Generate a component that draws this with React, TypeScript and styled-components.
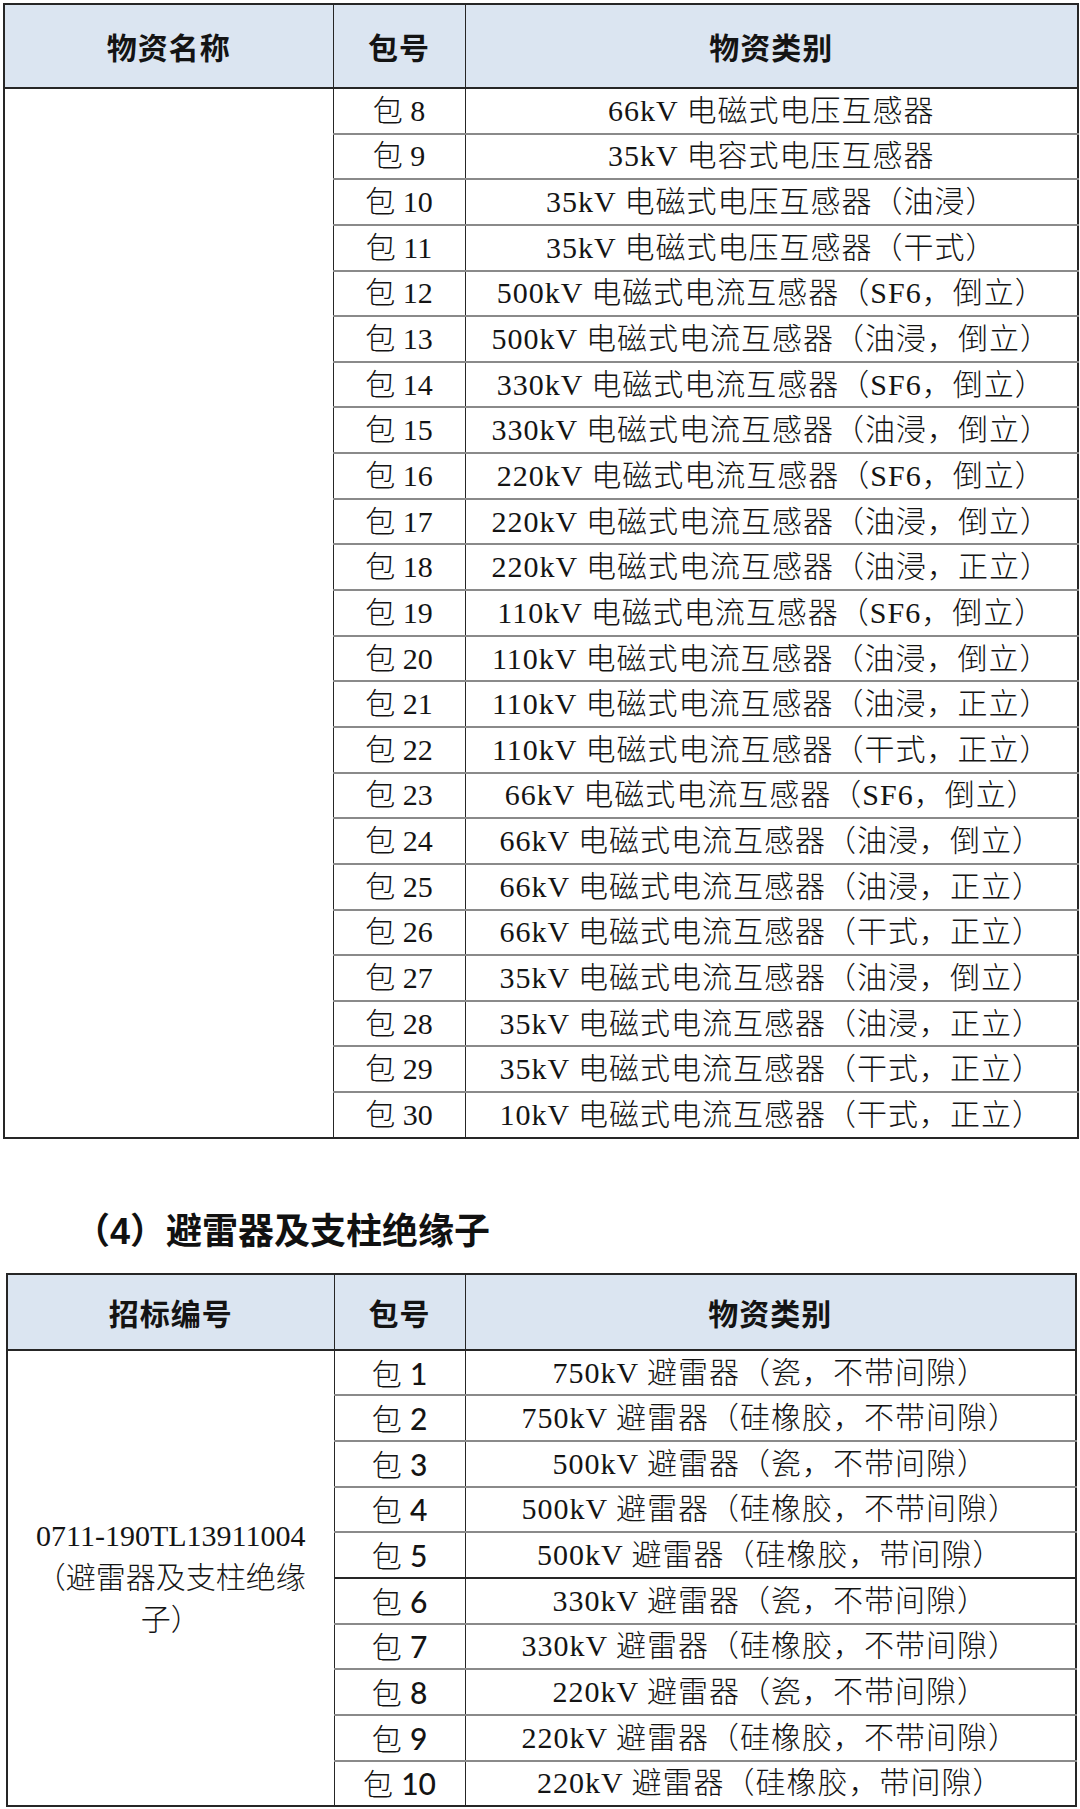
import React from "react";
import styled, { createGlobalStyle } from "styled-components";

const transformerRows: [string, string][] = [
  ["8", "66kV 电磁式电压互感器"],
  ["9", "35kV 电容式电压互感器"],
  ["10", "35kV 电磁式电压互感器（油浸）"],
  ["11", "35kV 电磁式电压互感器（干式）"],
  ["12", "500kV 电磁式电流互感器（SF6，倒立）"],
  ["13", "500kV 电磁式电流互感器（油浸，倒立）"],
  ["14", "330kV 电磁式电流互感器（SF6，倒立）"],
  ["15", "330kV 电磁式电流互感器（油浸，倒立）"],
  ["16", "220kV 电磁式电流互感器（SF6，倒立）"],
  ["17", "220kV 电磁式电流互感器（油浸，倒立）"],
  ["18", "220kV 电磁式电流互感器（油浸，正立）"],
  ["19", "110kV 电磁式电流互感器（SF6，倒立）"],
  ["20", "110kV 电磁式电流互感器（油浸，倒立）"],
  ["21", "110kV 电磁式电流互感器（油浸，正立）"],
  ["22", "110kV 电磁式电流互感器（干式，正立）"],
  ["23", "66kV 电磁式电流互感器（SF6，倒立）"],
  ["24", "66kV 电磁式电流互感器（油浸，倒立）"],
  ["25", "66kV 电磁式电流互感器（油浸，正立）"],
  ["26", "66kV 电磁式电流互感器（干式，正立）"],
  ["27", "35kV 电磁式电流互感器（油浸，倒立）"],
  ["28", "35kV 电磁式电流互感器（油浸，正立）"],
  ["29", "35kV 电磁式电流互感器（干式，正立）"],
  ["30", "10kV 电磁式电流互感器（干式，正立）"],
];

const arresterRows: [string, string][] = [
  ["1", "750kV 避雷器（瓷，不带间隙）"],
  ["2", "750kV 避雷器（硅橡胶，不带间隙）"],
  ["3", "500kV 避雷器（瓷，不带间隙）"],
  ["4", "500kV 避雷器（硅橡胶，不带间隙）"],
  ["5", "500kV 避雷器（硅橡胶，带间隙）"],
  ["6", "330kV 避雷器（瓷，不带间隙）"],
  ["7", "330kV 避雷器（硅橡胶，不带间隙）"],
  ["8", "220kV 避雷器（瓷，不带间隙）"],
  ["9", "220kV 避雷器（硅橡胶，不带间隙）"],
  ["10", "220kV 避雷器（硅橡胶，带间隙）"],
];

const GlobalStyle = createGlobalStyle`
  html, body {
    margin: 0;
    padding: 0;
    background: #ffffff;
  }
  body {
    font-family: "Liberation Serif", "Noto Sans CJK SC", serif;
    color: #141414;
  }
`;

export default function App() {
  return (
    <Page>
      <GlobalStyle />
      <Table $left={3} $width={1076}>
        <colgroup>
          <col style={{ width: 329 }} />
          <col style={{ width: 132 }} />
          <col />
        </colgroup>
        <thead>
          <HeadRow $h={84}>
            <HeadCell>物资名称</HeadCell>
            <HeadCell>包号</HeadCell>
            <HeadCell>物资类别</HeadCell>
          </HeadRow>
        </thead>
        <tbody>
          {transformerRows.map(([pkg, kind], i) => (
            <Row key={pkg}>
              {i === 0 && <NameCell rowSpan={transformerRows.length} />}
              <PkgCell>
                包 <span>{pkg}</span>
              </PkgCell>
              <KindCell>{kind}</KindCell>
            </Row>
          ))}
        </tbody>
      </Table>

      <SectionTitle>
        （<b>4</b>）避雷器及支柱绝缘子
      </SectionTitle>

      <Table $left={6} $width={1071}>
        <colgroup>
          <col style={{ width: 327 }} />
          <col style={{ width: 131 }} />
          <col />
        </colgroup>
        <thead>
          <HeadRow $h={76}>
            <HeadCell>招标编号</HeadCell>
            <HeadCell>包号</HeadCell>
            <HeadCell>物资类别</HeadCell>
          </HeadRow>
        </thead>
        <tbody>
          {arresterRows.map(([pkg, kind], i) => (
            <Row key={pkg} $dark={pkg === "6"}>
              {i === 0 && (
                <NameCell rowSpan={arresterRows.length}>
                  0711-190TL13911004（避雷器及支柱绝缘子）
                </NameCell>
              )}
              <PkgCell $sans>
                包 <span>{pkg}</span>
              </PkgCell>
              <KindCell>{kind}</KindCell>
            </Row>
          ))}
        </tbody>
      </Table>
    </Page>
  );
}

const Page = styled.div`
  width: 1080px;
  padding-top: 3px;
`;

const Table = styled.table<{ $left: number; $width: number }>`
  margin-left: ${(p) => p.$left}px;
  width: ${(p) => p.$width}px;
  border-collapse: collapse;
  table-layout: fixed;
  border: 2px solid #262626;
`;

const HeadRow = styled.tr<{ $h: number }>`
  height: ${(p) => p.$h}px;
  background: #dbe5f1;
`;

const HeadCell = styled.th`
  padding: 0;
  border-left: 1px solid #262626;
  border-bottom: 2px solid #262626;
  font-family: "Noto Sans CJK SC", sans-serif;
  font-weight: 700;
  font-size: 30px;
  letter-spacing: 1px;
  text-align: center;
  vertical-align: middle;
`;

const Row = styled.tr<{ $dark?: boolean }>`
  height: 45.65px;
  border-top: 2px solid ${(p) => (p.$dark ? "#262626" : "#8a8a8a")};
`;

const NameCell = styled.td`
  padding: 0 18px;
  border-right: 1px solid #262626;
  border-top: 2px solid #262626;
  font-size: 30px;
  font-weight: 300;
  line-height: 42px;
  text-align: center;
  vertical-align: middle;
`;

const PkgCell = styled.td<{ $sans?: boolean }>`
  padding: 0;
  border-right: 1px solid #262626;
  font-family: ${(p) =>
    p.$sans
      ? `Lato, "Noto Sans CJK SC", sans-serif`
      : `"Liberation Serif", "Noto Sans CJK SC", serif`};
  font-size: 30px;
  font-weight: 300;
  line-height: 1;
  text-align: center;
  vertical-align: middle;
  white-space: nowrap;

  & span {
    font-weight: ${(p) => (p.$sans ? 500 : 400)};
  }
`;

const KindCell = styled.td`
  padding: 0;
  font-size: 30px;
  font-weight: 300;
  letter-spacing: 1px;
  line-height: 1;
  text-align: center;
  vertical-align: middle;
  white-space: nowrap;
`;

const SectionTitle = styled.h2`
  margin: 0;
  padding: 69px 0 25px 74px;
  height: 40px;
  font-family: "Noto Sans CJK SC", sans-serif;
  font-weight: 700;
  font-size: 36px;
  line-height: 40px;
  color: #111111;

  & b {
    font-family: "Liberation Sans", sans-serif;
    font-weight: 700;
  }
`;
